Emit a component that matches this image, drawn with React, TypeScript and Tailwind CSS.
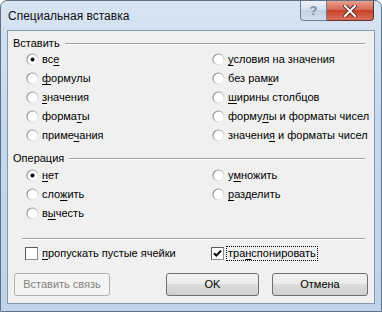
import type { ReactNode } from "react";

const font = { fontFamily: '"Liberation Sans", Arial, sans-serif' };

const Radio = ({ checked = false }: { checked?: boolean }) => (
  <svg width="13" height="13" viewBox="0 0 13 13" className="shrink-0">
    <defs>
      <linearGradient id="rg" x1="0" y1="0" x2="1" y2="1">
        <stop offset="0" stopColor="#707070" />
        <stop offset="0.55" stopColor="#c8c8c8" />
        <stop offset="1" stopColor="#ffffff" />
      </linearGradient>
    </defs>
    <circle cx="6.5" cy="6.5" r="5.5" fill="#ffffff" stroke="url(#rg)" strokeWidth="1.2" />
    {checked && <circle cx="6.5" cy="6.5" r="2" fill="#000000" />}
  </svg>
);

const Check = ({ checked = false }: { checked?: boolean }) => (
  <svg width="13" height="13" viewBox="0 0 13 13" className="shrink-0">
    <rect x="0.5" y="0.5" width="12" height="12" fill="#ffffff" stroke="#8c8c8c" />
    <path d="M0.5 12.5V0.5H12.5" fill="none" stroke="#5a5a5a" />
    {checked && (
      <path d="M3 6.2 L5.3 8.6 L10 3.6" fill="none" stroke="#000" strokeWidth="2" />
    )}
  </svg>
);

// label with an underlined access key
const Lbl = ({ pre, key_, post }: { pre: string; key_: string; post: string }) => (
  <span className="whitespace-nowrap">
    {pre}
    <span className="underline underline-offset-2">{key_}</span>
    {post}
  </span>
);

const Opt = ({ checked, children }: { checked?: boolean; children: ReactNode }) => (
  <div className="flex h-[19px] items-center gap-[3px]">
    <Radio checked={checked} />
    {children}
  </div>
);

const Group = ({ title }: { title: string }) => (
  <div className="flex h-[13px] items-center gap-[5px] pl-[5px] pr-[9px] leading-[13px]">
    <span>{title}</span>
    <div className="h-[2px] flex-1 border-t border-b border-t-[#a0a0a0] border-b-white" />
  </div>
);

const Btn = ({ children, disabled, w }: { children: ReactNode; disabled?: boolean; w: string }) => (
  <div
    className={`${w} flex h-[23px] items-center justify-center rounded-[3px] border ${
      disabled
        ? "border-[#adb2b5] bg-[#f4f4f4] text-[#838383]"
        : "border-[#707070] bg-[linear-gradient(#f2f2f2_0%,#ebebeb_50%,#dddddd_50%,#cfcfcf_100%)] text-black"
    }`}
  >
    {children}
  </div>
);

export default function App() {
  return (
    <div
      className="flex h-[312px] w-[382px] flex-col rounded-t-[7px] border border-[#5f7287] bg-[linear-gradient(180deg,#d7e4f3_0%,#c6d8ed_40%,#bed3ea_100%)]"
      style={font}
    >
      <div className="flex h-[29px] items-start justify-between">
        <div className="pl-[7px] pt-[6px] text-[12px] text-[#111]">Специальная вставка</div>
        <div className="mr-[7px] flex">
          <div className="flex h-[20px] w-[27px] items-center justify-center rounded-bl-[4px] border border-t-0 border-[#6d7f93] bg-[linear-gradient(#eef3f9,#d3deeb_50%,#c3d1e2_50%,#d2dfee)] text-[13px] font-bold text-[#7f8fa3]">
            ?
          </div>
          <div className="flex h-[20px] w-[47px] items-center justify-center rounded-br-[4px] border border-l-0 border-t-0 border-[#6b2d26] bg-[linear-gradient(#e8a18f,#d26a55_45%,#c7412b_50%,#d8705a)]">
            <svg width="14" height="12" viewBox="0 0 14 12">
              <path d="M2 1 L12 11 M12 1 L2 11" stroke="#5b2a22" strokeWidth="4" strokeLinecap="square" />
              <path d="M2 1 L12 11 M12 1 L2 11" stroke="#ffffff" strokeWidth="2" strokeLinecap="square" />
            </svg>
          </div>
        </div>
      </div>

      <div className="mx-[6px] flex h-[274px] flex-col border border-[#8597ab] bg-[#f0f0f0] text-[11px] text-black">
        <div className="pt-[6px]">
          <Group title="Вставить" />
        </div>
        <div className="flex">
          <div className="w-[186px] pl-[18px]">
            <Opt checked><Lbl pre="вс" key_="е" post="" /></Opt>
            <Opt><Lbl pre="" key_="ф" post="ормулы" /></Opt>
            <Opt><Lbl pre="" key_="з" post="начения" /></Opt>
            <Opt><Lbl pre="форма" key_="т" post="ы" /></Opt>
            <Opt><Lbl pre="приме" key_="ч" post="ания" /></Opt>
          </div>
          <div className="flex-1 pl-[18px]">
            <Opt><Lbl pre="" key_="у" post="словия на значения" /></Opt>
            <Opt><Lbl pre="без рам" key_="к" post="и" /></Opt>
            <Opt><Lbl pre="" key_="ш" post="ирины столбцов" /></Opt>
            <Opt><Lbl pre="форму" key_="л" post="ы и форматы чисел" /></Opt>
            <Opt><Lbl pre="значени" key_="я" post=" и форматы чисел" /></Opt>
          </div>
        </div>

        <div className="mt-[7px]">
          <Group title="Операция" />
        </div>
        <div className="mt-[1px] flex">
          <div className="w-[186px] pl-[18px]">
            <Opt checked><Lbl pre="" key_="н" post="ет" /></Opt>
            <Opt><Lbl pre="сло" key_="ж" post="ить" /></Opt>
            <Opt><Lbl pre="в" key_="ы" post="честь" /></Opt>
          </div>
          <div className="flex-1 pl-[18px]">
            <Opt><Lbl pre="у" key_="м" post="ножить" /></Opt>
            <Opt><Lbl pre="" key_="р" post="азделить" /></Opt>
          </div>
        </div>

        <div className="ml-[14px] mr-[9px] mt-[15px] h-[2px] border-t border-b border-t-[#a0a0a0] border-b-white" />

        <div className="mt-[6px] flex h-[15px] items-center">
          <div className="flex w-[203px] items-center gap-[4px] pl-[17px]">
            <Check />
            <Lbl pre="" key_="п" post="ропускать пустые ячейки" />
          </div>
          <div className="flex items-center gap-[2px]">
            <Check checked />
            <span className="border border-dotted border-black px-[1px] leading-[13px]">
              <Lbl pre="тра" key_="н" post="спонировать" />
            </span>
          </div>
        </div>

        <div className="mt-[12px] flex items-center pl-[6px]">
          <Btn disabled w="w-[96px]">Вставить связь</Btn>
          <div className="ml-[56px]">
            <Btn w="w-[93px]">OK</Btn>
          </div>
          <div className="ml-[13px]">
            <Btn w="w-[96px]">Отмена</Btn>
          </div>
        </div>
      </div>
    </div>
  );
}
